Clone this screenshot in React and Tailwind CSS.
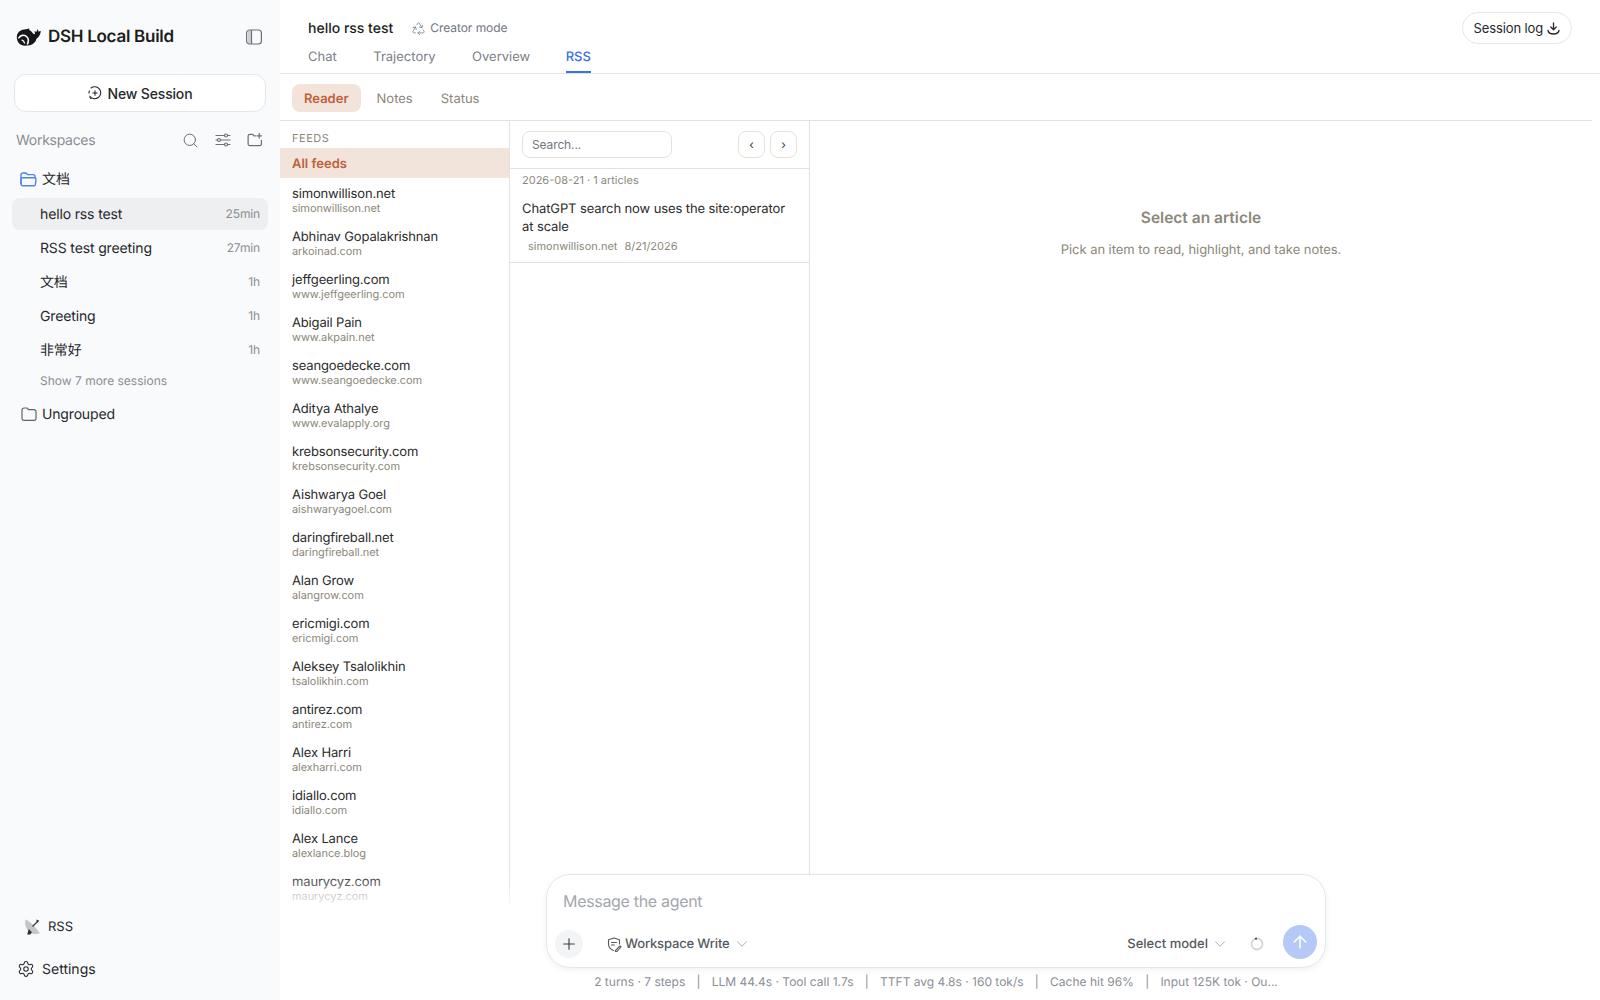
import React from "react";
import { Search, Settings, Recycle, ChevronDown, Plus, ArrowUp } from "lucide-react";

const feeds = [
  ["simonwillison.net", "simonwillison.net"],
  ["Abhinav Gopalakrishnan", "arkoinad.com"],
  ["jeffgeerling.com", "www.jeffgeerling.com"],
  ["Abigail Pain", "www.akpain.net"],
  ["seangoedecke.com", "www.seangoedecke.com"],
  ["Aditya Athalye", "www.evalapply.org"],
  ["krebsonsecurity.com", "krebsonsecurity.com"],
  ["Aishwarya Goel", "aishwaryagoel.com"],
  ["daringfireball.net", "daringfireball.net"],
  ["Alan Grow", "alangrow.com"],
  ["ericmigi.com", "ericmigi.com"],
  ["Aleksey Tsalolikhin", "tsalolikhin.com"],
  ["antirez.com", "antirez.com"],
  ["Alex Harri", "alexharri.com"],
  ["idiallo.com", "idiallo.com"],
  ["Alex Lance", "alexlance.blog"],
  ["maurycyz.com", "maurycyz.com"],
];

const sessions = [
  ["hello rss test", "25min", true],
  ["RSS test greeting", "27min"],
  ["文档", "1h"],
  ["Greeting", "1h"],
  ["非常好", "1h"],
];

const Logo = () => (
  <svg width="25" height="18" viewBox="0 0 25 18" className="shrink-0">
    <path d="M.8 9C.8 4 5 1.200 10 1.200l3-.7.5 1.800c1.500.7 2.500 1.800 3.500 3.200.8.8 1.500.8 2 .3L18.500 3l2 1 .7-3 1.300 2.600L24.800 3c-.3 3.500-1.800 6-4.300 7.800-.8 3-3 5.500-6.500 6.400l-5 .5C4 17.700.8 14 .8 9z" fill="#16161a" />
    <path d="M2.800 9.800C4.500 7 8 6.500 10.500 8.500c2 1.800 2.300 4.800 1 7.500" fill="none" stroke="#f9fafc" strokeWidth="1.600" strokeLinecap="round" />
    <path d="M6 12.200c1 .3 2 1.300 2.500 2.800" fill="none" stroke="#f9fafc" strokeWidth="1.300" strokeLinecap="round" />
  </svg>
);

const SidebarIcon = () => (
  <svg width="18" height="18" viewBox="0 0 18 18" fill="none" stroke="#6b7078" strokeWidth="1.200">
    <rect x="1.600" y="2" width="14.800" height="14" rx="3" />
    <path d="M3 3v12h3V3z" fill="#6b7078" fillOpacity=".3" stroke="none" />
    <path d="M6.500 2v14" />
  </svg>
);

const DashedPlus = () => (
  <svg width="14" height="14" viewBox="0 0 14 14" fill="none" stroke="#26282c" strokeWidth="1.100" strokeLinecap="round">
    <path d="M3 2a6 6 0 1 1-1.200 8.200" />
    <path d="M1 7a6 6 0 0 1 .4-2" />
    <path d="M2 11.500l1 1" />
    <path d="M7 4.800v4.400M4.800 7h4.400" />
  </svg>
);

const Sliders = () => (
  <svg width="16" height="16" viewBox="0 0 16 16" fill="none" stroke="#6b7078" strokeWidth="1.200" strokeLinecap="round">
    <path d="M1 3.500h8.500M12.500 3.500H15M1 8h1.500M5.500 8H15M1 12.500h8.500M12.500 12.500H15" />
    <circle cx="11" cy="3.500" r="1.500" />
    <circle cx="4" cy="8" r="1.500" />
    <circle cx="11" cy="12.500" r="1.500" />
  </svg>
);

const FolderPlus = () => (
  <svg width="16" height="16" viewBox="0 0 17 17" fill="none" stroke="#6b7078" strokeWidth="1.300" strokeLinecap="round" strokeLinejoin="round">
    <path d="M9 4H7.500L6 2.500H3A1.800 1.800 0 0 0 1.200 4.300v8.400A1.800 1.800 0 0 0 3 14.500h10.500a1.800 1.800 0 0 0 1.800-1.800V9" />
    <path d="M13 1.500v5M10.500 4h5" />
  </svg>
);

const FolderOpen = () => (
  <svg width="17" height="15" viewBox="0 0 17 15" fill="none" stroke="#4f82ea" strokeWidth="1.400" strokeLinejoin="round">
    <path d="M1 12V3a2 2 0 0 1 2-2h3l1.500 1.600H13a2 2 0 0 1 2 2V6" />
    <path d="M1 7a1.500 1.500 0 0 1 1.500-1.200h12A1.500 1.500 0 0 1 16 7l-.6 5.500a1.500 1.500 0 0 1-1.500 1.300H2.800a1.800 1.800 0 0 1-1.800-1.800z" />
  </svg>
);

const FolderClosed = () => (
  <svg width="16" height="14" viewBox="0 0 16 14" fill="none" stroke="#5f646c" strokeWidth="1.200" strokeLinejoin="round">
    <path d="M1 11.500V3a2 2 0 0 1 2-2h3l1.500 1.700H13a2 2 0 0 1 2 2v6.800a1.800 1.800 0 0 1-1.800 1.800H2.800A1.800 1.800 0 0 1 1 11.500z" />
  </svg>
);

const Dish = () => (
  <svg width="18" height="18" viewBox="0 0 17 17">
    <path d="M1.500 1.500c3 .8 10.500 8 13.500 13-4 1.500-9 .5-11.500-3S.5 5 1.500 1.500z" fill="#c3c6cc" />
    <path d="M8 8l5-5" stroke="#3a3d42" strokeWidth="1.200" />
    <path d="M11.500 1.500l3 1-2 2z" fill="#2a2c30" />
    <path d="M3 15.500l1.500-5 3 3-1.500 2z" fill="#2f3136" />
  </svg>
);

const ShieldPen = () => (
  <svg width="15" height="15" viewBox="0 0 15 15" fill="none" stroke="#55595f" strokeWidth="1.100" strokeLinecap="round" strokeLinejoin="round">
    <path d="M7 1l5.500 1.800v4.200M7 1L1.500 2.800V7c0 3 2.200 5.400 5 6.500" />
    <path d="M4.500 5.500h5M4.500 8h3" />
    <path d="M8.500 13.500l4.500-4.500 1 1-4 4.500H8.500z" />
  </svg>
);

const TrayDown = () => (
  <svg width="13" height="13" viewBox="0 0 13 13" fill="none" stroke="#26282c" strokeWidth="1.300" strokeLinecap="round" strokeLinejoin="round">
    <path d="M6.500 1v6.500M3.800 5l2.700 2.700L9.200 5" />
    <path d="M1 8.500c.5 2.500 2.500 3.500 5.500 3.500s5-1 5.500-3.500" />
  </svg>
);

const Spinner = () => (
  <svg width="14" height="14" viewBox="0 0 14 14" fill="none">
    <circle cx="7" cy="7" r="5.500" stroke="#d4d6da" strokeWidth="1.800" />
    <path d="M7 1.500a5.500 5.500 0 0 0-2 .4" stroke="#55595f" strokeWidth="1.800" />
  </svg>
);

export default function App() {
  return (
    <div className="flex h-screen overflow-hidden bg-white font-['Inter','Noto_Sans_CJK_SC',sans-serif] text-[#26282c] antialiased [text-rendering:geometricPrecision]">
      {/* Sidebar */}
      <aside className="flex w-[280px] shrink-0 flex-col bg-[#f9fafc] px-3">
        <div className="flex h-[74px] items-center justify-between pl-1 pr-[5px]">
          <div className="flex items-center gap-[7px]">
            <Logo />
            <span className="pt-px text-[17px] font-semibold tracking-[-0.016em] text-[#1c1d20]">DSH Local Build</span>
          </div>
          <SidebarIcon />
        </div>
        <button className="mx-[2px] flex h-[38px] items-center justify-center gap-[6px] rounded-xl border border-[#e6e7e9] bg-white text-[14px] font-medium tracking-[-0.012em]">
          <DashedPlus />
          New Session
        </button>
        <div className="mt-[14px] flex h-[28px] items-center justify-between pl-1 pr-[5px]">
          <span className="text-[14px] tracking-[-0.02em] text-[#8a8e95]">Workspaces</span>
          <div className="flex items-center gap-[16px] text-[#6b7078]">
            <Search size={17} strokeWidth={1.400} />
            <Sliders />
            <FolderPlus />
          </div>
        </div>
        <div className="mt-[15px] flex h-[20px] items-center gap-[5px] pl-2 text-[14px]">
          <FolderOpen />
          <span>文档</span>
        </div>
        <div className="mt-[9px] flex flex-col">
          {sessions.map(([name, time, active]) => (
            <div
              key={name}
              className={`mb-[2px] flex h-[32px] items-center justify-between rounded-lg pl-7 pr-2 text-[14px] tracking-[-0.01em] ${active ? "bg-[#eeeff1]" : ""}`}
            >
              <span>{name}</span>
              <span className="text-[12px] text-[#8a8e95]">{time}</span>
            </div>
          ))}
        </div>
        <div className="mt-[4px] pl-7 text-[12px] text-[#8a8e95]">Show 7 more sessions</div>
        <div className="mt-[14px] flex h-[20px] items-center gap-[5px] pl-[9px] text-[14px] tracking-[-0.012em]">
          <FolderClosed />
          <span>Ungrouped</span>
        </div>
        <div className="flex-1" />
        <div className="flex h-[20px] items-center gap-[6px] pl-[12px] text-[13px]">
          <Dish />
          <span className="pt-[2px]">RSS</span>
        </div>
        <div className="mb-[21px] mt-[22px] flex h-[20px] items-center gap-[7px] pl-[5px] text-[14px]">
          <Settings size={18} strokeWidth={1.400} />
          Settings
        </div>
      </aside>

      {/* Main */}
      <main className="relative flex min-w-0 flex-1 flex-col">
        <header className="relative h-[74px] shrink-0 border-b border-[#e5e5e3] pl-7">
          <div className="flex items-start justify-between pr-7 pt-3">
            <div>
              <div className="flex h-[32px] items-center gap-[18px]">
                <span className="text-[14px] font-medium text-[#1c1d20]">hello rss test</span>
                <span className="flex items-center gap-[4px] text-[12px] tracking-[-0.005em] text-[#72767d]">
                  <Recycle size={15} strokeWidth={1.200} />
                  Creator mode
                </span>
              </div>
              <nav className="flex items-start gap-[36.500px] text-[13px] text-[#7c8087]">
                <span className="h-[29px] pt-[4px]">Chat</span>
                <span className="h-[29px] pt-[4px]">Trajectory</span>
                <span className="h-[29px] pt-[4px]">Overview</span>
                <span className="-ml-px h-[29px] border-b-2 border-[#3b71e6] pt-[4px] font-medium text-[#3b71e6]">RSS</span>
              </nav>
            </div>
            <button className="flex h-[32px] items-center gap-[4px] rounded-full border border-[#e6e7e9] px-[11px] text-[13px] tracking-[-0.01em]">
              <span className="pt-px">Session log</span>
              <TrayDown />
            </button>
          </div>
        </header>

        {/* RSS panel */}
        <section className="mb-[95px] mr-2 flex min-h-0 flex-1 flex-col">
          <div className="flex h-[47px] shrink-0 items-center gap-1 border-b border-[#e4e2da] px-3 pt-[2px] text-[13px] text-[#8c877a]">
            <span className="flex h-[28px] items-center rounded-lg bg-[#f2e4da] px-3 pt-[4px] font-semibold text-[#c0603a]">Reader</span>
            <span className="px-3 pt-[4px]">Notes</span>
            <span className="px-3 pt-[4px]">Status</span>
          </div>
          <div className="flex min-h-0 flex-1">
            <div className="w-[230px] shrink-0 overflow-hidden border-r border-[#e4e2da]">
              <div className="flex h-[27px] items-end px-3 pb-[2px] text-[11px] uppercase tracking-wider text-[#8c877a]">Feeds</div>
              <div className="flex h-[30px] items-center bg-[#f2e4da] px-3 pt-[3px] text-[13px] font-semibold text-[#c0603a]">All feeds</div>
              {feeds.map(([name, url]) => (
                <div key={name} className="flex h-[43px] flex-col justify-center px-3">
                  <div className="text-[13px] leading-[18px] tracking-[-0.012em] text-[#2b2b2b]">{name}</div>
                  <div className="-translate-y-px text-[11px] leading-[12px] tracking-[-0.006em] text-[#8c877a]">{url}</div>
                </div>
              ))}
            </div>
            <div className="flex w-[300px] shrink-0 flex-col border-r border-[#e4e2da]">
              <div className="flex h-[48px] shrink-0 items-center justify-between border-b border-[#e4e2da] px-3">
                <input
                  placeholder="Search..."
                  className="h-[27px] w-[150px] rounded-lg border border-[#e4e2da] px-[9px] text-[12px] tracking-[-0.01em] outline-none placeholder:text-[#72767d]"
                />
                <div className="flex gap-[5px] text-[12px] text-[#3a3a3a]">
                  <button className="h-[27px] w-[27px] rounded-lg border border-[#e4e2da]">‹</button>
                  <button className="h-[27px] w-[27px] rounded-lg border border-[#e4e2da]">›</button>
                </div>
              </div>
              <div className="px-3 pt-[4px] text-[11px] leading-[14px] text-[#8c877a]">2026-08-21 · 1 articles</div>
              <div className="border-b border-[#e4e2da] px-3 pb-[9px] pt-[13px]">
                <div className="text-[13px] leading-[18px] tracking-[-0.008em] text-[#2b2b2b]">ChatGPT search now uses the site:operator at scale</div>
                <div className="mt-[3px] flex gap-[7px] pl-[6px] text-[11px] leading-[14px] text-[#8c877a]">
                  <span>simonwillison.net</span>
                  <span>8/21/2026</span>
                </div>
              </div>
            </div>
            <div className="flex min-w-0 flex-1 flex-col items-center pt-[87px]">
              <div className="text-[15.500px] font-semibold leading-[20px] text-[#8c877a]">Select an article</div>
              <div className="mt-[12px] text-[13px] leading-[20px] tracking-[-0.004em] text-[#8c877a]">Pick an item to read, highlight, and take notes.</div>
            </div>
          </div>
        </section>

        {/* Composer, sits over the panel */}
        <div className="absolute inset-x-0 bottom-0 flex h-[126px] flex-col items-center bg-gradient-to-b from-white/0 via-white via-[30%] to-white pr-[8px]">
          <div className="flex h-[94px] w-[780px] flex-col justify-between rounded-[24px] border border-[#e6e7e9] bg-white pb-2 pl-2 pr-2 pt-[16px] shadow-[0_2px_6px_rgba(0,0,0,0.06)]">
            <div className="pl-2 text-[16px] leading-[20px] tracking-[-0.02em] text-[#a3a7ae]">Message the agent</div>
            <div className="flex items-center justify-between">
              <div className="mt-[4px] flex items-center gap-[24px]">
                <span className="flex h-[28px] w-[28px] items-center justify-center rounded-full bg-[#f3f4f6] text-[#3a3d42]">
                  <Plus size={18} strokeWidth={1.500} />
                </span>
                <span className="flex items-center gap-[3px] text-[13px] font-medium tracking-[-0.012em] text-[#55595f]">
                  <ShieldPen />
                  <span className="pt-[2px]">Workspace Write</span>
                  <ChevronDown size={18} strokeWidth={1} className="text-[#8a8e95]" />
                </span>
              </div>
              <div className="flex items-center">
                <span className="mt-[4px] flex items-center gap-[3px] text-[13px] font-medium text-[#55595f]">
                  <span className="pt-[2px]">Select model</span>
                  <ChevronDown size={18} strokeWidth={1} className="text-[#8a8e95]" />
                </span>
                <span className="ml-[21px] mt-[4px]"><Spinner /></span>
                <span className="ml-[19px] flex h-[34px] w-[34px] items-center justify-center rounded-full bg-[#b4c9f5] text-white">
                  <ArrowUp size={20} strokeWidth={1.800} />
                </span>
              </div>
            </div>
          </div>
          <div className="mt-[6px] flex gap-[11.250px] text-[12px] leading-[16px] text-[#8a8e95]">
            <span>2 turns · 7 steps</span><span>|</span>
            <span>LLM 44.4s · Tool call 1.7s</span><span>|</span>
            <span>TTFT avg 4.8s · 160 tok/s</span><span>|</span>
            <span>Cache hit 96%</span><span>|</span>
            <span>Input 125K tok · Ou...</span>
          </div>
        </div>
      </main>
    </div>
  );
}
